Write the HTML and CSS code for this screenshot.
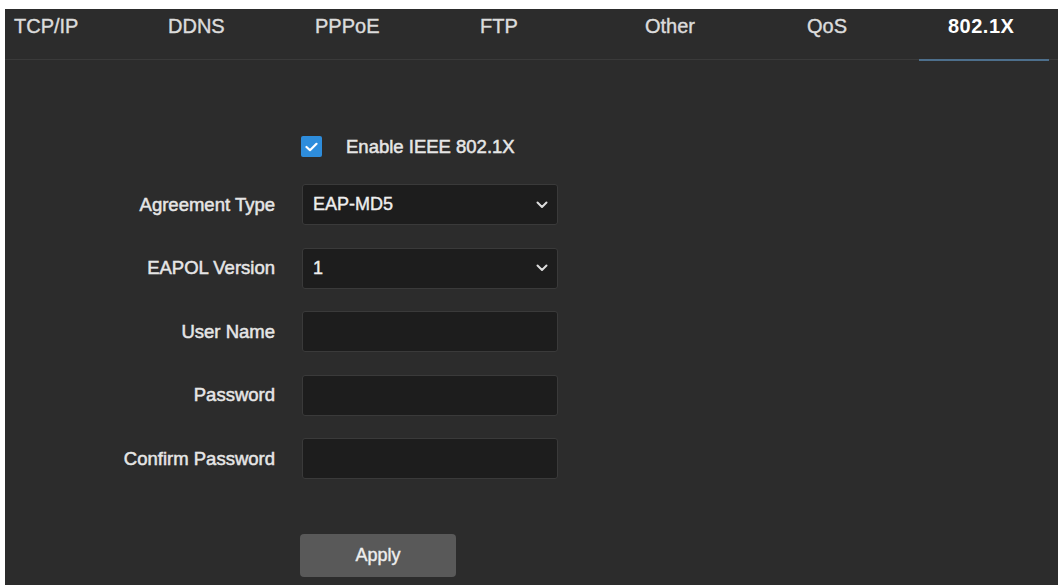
FILE: index.html
```html
<!DOCTYPE html>
<html>
<head>
<meta charset="utf-8">
<link rel="stylesheet" href="styles.css">
</head>
<body>
<div class="panel">
  <nav class="tabs">
    <div class="tab t1">TCP/IP</div>
    <div class="tab t2">DDNS</div>
    <div class="tab t3">PPPoE</div>
    <div class="tab t4">FTP</div>
    <div class="tab t5">Other</div>
    <div class="tab t6">QoS</div>
    <div class="tab t7 active">802.1X</div>
  </nav>
  <form class="form">
    <div class="label"></div>
    <label class="check-row">
      <span class="checkbox">
        <svg width="13" height="10" viewBox="0 0 13 10"><polyline points="1.5,5 5,8.2 11.5,1.8" fill="none" stroke="#fff" stroke-width="2.2" stroke-linecap="round" stroke-linejoin="round"/></svg>
      </span>
      <span class="check-text">Enable IEEE 802.1X</span>
    </label>

    <div class="label">Agreement Type</div>
    <div class="field select"><span>EAP-MD5</span>
      <svg class="chev" width="12" height="8" viewBox="0 0 12 8"><polyline points="1.5,1.5 6,6 10.5,1.5" fill="none" stroke="#ddd" stroke-width="2" stroke-linecap="round" stroke-linejoin="round"/></svg>
    </div>

    <div class="label">EAPOL Version</div>
    <div class="field select"><span>1</span>
      <svg class="chev" width="12" height="8" viewBox="0 0 12 8"><polyline points="1.5,1.5 6,6 10.5,1.5" fill="none" stroke="#ddd" stroke-width="2" stroke-linecap="round" stroke-linejoin="round"/></svg>
    </div>

    <div class="label">User Name</div>
    <div class="field"></div>

    <div class="label">Password</div>
    <div class="field"></div>

    <div class="label">Confirm Password</div>
    <div class="field"></div>

    <div class="label"></div>
    <div class="btn-row"><button type="button" class="apply">Apply</button></div>
  </form>
</div>
</body>
</html>
```
FILE: styles.css
```css
html, body {
  margin: 0;
  padding: 0;
  background: #ffffff;
}
body {
  padding: 9px 4px 2px 5px;
  font-family: "Liberation Sans", Arial, sans-serif;
}
.panel {
  height: 576px;
  background: #2c2c2c;
  display: flex;
  flex-direction: column;
  overflow: hidden;
}
.tabs {
  display: flex;
  height: 50px;
  border-bottom: 1px solid #3a3a3a;
  flex-shrink: 0;
}
.tab {
  position: relative;
  font-size: 20px;
  line-height: 24px;
  padding-top: 5px;
  color: #dcdcdc;
  -webkit-text-stroke: 0.4px #dcdcdc;
  box-sizing: border-box;
}
.t1 { width: 163px; padding-left: 9px; }
.t2 { width: 147px; }
.t3 { width: 165px; }
.t4 { width: 165px; }
.t5 { width: 162px; }
.t6 { width: 112px; }
.t7 { width: 130px; padding-left: 29px; }
.tab.active {
  color: #ffffff;
  font-weight: bold;
  letter-spacing: 0.5px;
  -webkit-text-stroke: 0;
}
.tab.active::after {
  content: "";
  position: absolute;
  left: 0;
  right: 0;
  bottom: -2px;
  height: 2px;
  background: #4d6f8c;
}
.form {
  margin: 0;
  padding-top: 76px;
  display: grid;
  grid-template-columns: 270px 256px;
  column-gap: 27px;
  row-gap: 22.5px;
  align-items: center;
}
.label {
  text-align: right;
  font-size: 18.5px;
  color: #e6e6e6;
  -webkit-text-stroke: 0.5px #e6e6e6;
}
.check-row {
  display: flex;
  align-items: center;
  height: 21px;
  margin-left: -1px;
  margin-bottom: 4.5px;
}
.checkbox {
  width: 21px;
  height: 21px;
  background: #2e8ddc;
  border-radius: 2px;
  display: flex;
  align-items: center;
  justify-content: center;
}
.check-text {
  margin-left: 24px;
  font-size: 18.5px;
  color: #e6e6e6;
  -webkit-text-stroke: 0.5px #e6e6e6;
}
.field {
  height: 41px;
  box-sizing: border-box;
  background: #1d1d1d;
  border: 1px solid #3a3a3a;
  border-radius: 3px;
  display: flex;
  align-items: center;
  padding: 0 9px 0 10px;
  font-size: 18px;
  color: #eeeeee;
  -webkit-text-stroke: 0.4px #eeeeee;
}
.select {
  justify-content: space-between;
}
.btn-row {
  padding-top: 32px;
  margin-left: -2px;
}
.apply {
  width: 156px;
  height: 43px;
  background: #595959;
  border: none;
  border-radius: 4px;
  font-family: "Liberation Sans", Arial, sans-serif;
  font-size: 18px;
  color: #eeeeee;
  -webkit-text-stroke: 0.4px #eeeeee;
}
```
